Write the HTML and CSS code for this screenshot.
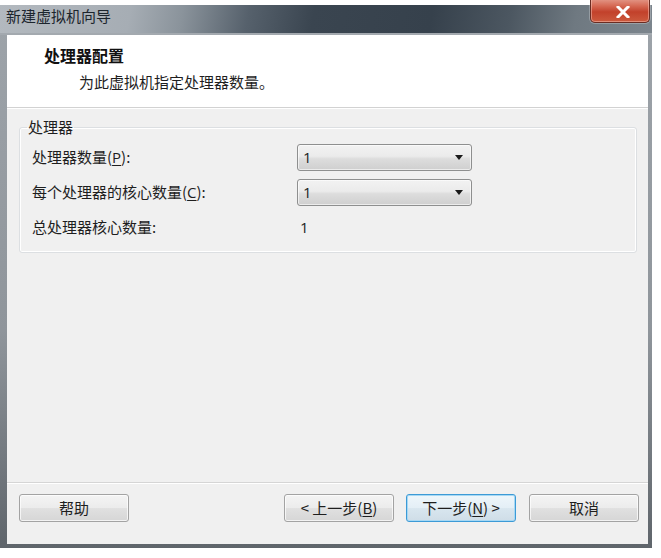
FILE: index.html
```html
<!DOCTYPE html>
<html lang="zh-CN">
<head>
<meta charset="utf-8">
<title>新建虚拟机向导</title>
<link rel="stylesheet" href="styles.css">
</head>
<body>
<div class="window">
  <div class="titlebar">
    <span class="title">新建虚拟机向导</span>
    <div class="close">
      <svg width="14" height="12" viewBox="0 0 14 12">
        <path d="M2 1 L12 11 M12 1 L2 11" stroke="#ffffff" stroke-width="3" stroke-linecap="square"/>
      </svg>
    </div>
  </div>
  <div class="client">
    <div class="header">
      <div class="h-title">处理器配置</div>
      <div class="h-sub">为此虚拟机指定处理器数量。</div>
    </div>
    <div class="body">
      <fieldset class="group">
        <legend>处理器</legend>
        <div class="grid">
          <div class="label">处理器数量(<u>P</u>):</div>
          <div class="combo"><span>1</span><i class="arrow"></i></div>
          <div class="label">每个处理器的核心数量(<u>C</u>):</div>
          <div class="combo"><span>1</span><i class="arrow"></i></div>
          <div class="label">总处理器核心数量:</div>
          <div class="value">1</div>
        </div>
      </fieldset>
    </div>
    <div class="footer">
      <div class="btn">帮助</div>
      <div class="spacer"></div>
      <div class="btn">&lt; 上一步(<u>B</u>)</div>
      <div class="btn default">下一步(<u>N</u>) &gt;</div>
      <div class="btn cancel">取消</div>
    </div>
  </div>
</div>
</body>
</html>
```

FILE: styles.css
```css
html, body {
  margin: 0;
  padding: 0;
  background: #ffffff;
}
body {
  width: 661px;
  height: 558px;
  overflow: hidden;
  font-family: "Open Sans", "Noto Sans CJK SC", sans-serif;
  font-size: 15px;
  color: #1e1e1e;
}
.window {
  position: relative;
  margin-top: 5px;
  width: 652px;
  height: 543px;
  box-sizing: border-box;
  padding: 0 4px 4px 7px;
  display: flex;
  flex-direction: column;
  background: linear-gradient(to bottom, #9ea4aa 0%, #8f959b 60%, #5f656b 100%);
}
.titlebar {
  height: 28px;
  margin: 0 -4px 0 -7px;
  padding-left: 6px;
  border-bottom: 2px solid #a3a9af;
  display: flex;
  align-items: flex-start;
  background: linear-gradient(100deg, #b3b9bf 0%, #a6adb4 20%, #8a939b 28%, #56616c 38%, #3a4550 48%, #36414c 66%, #4c5761 78%, #6f7981 88%, #7c858d 100%);
}
.title {
  padding-top: 2px;
  line-height: 18px;
  font-size: 15px;
  color: #1c252d;
  font-family: "Noto Sans CJK SC", sans-serif;
}
.close {
  position: absolute;
  top: -8px;
  right: 2px;
  width: 60px;
  height: 26px;
  box-sizing: border-box;
  border: 1px solid #6a2c22;
  border-top: none;
  border-radius: 0 0 5px 5px;
  background: linear-gradient(to bottom, #e7a597 0%, #d66a55 35%, #c2412b 60%, #cc5a3e 100%);
  box-shadow: inset 0 0 0 1px rgba(255, 210, 200, 0.45), 0 0 0 1px rgba(255, 255, 255, 0.25);
  display: flex;
  align-items: center;
  justify-content: center;
  padding-top: 2px;
}
.close svg {
  margin-left: 5px;
  margin-top: 2px;
}
.client {
  flex: 1;
  display: flex;
  flex-direction: column;
  background: #f0f0f0;
}
.header {
  height: 73px;
  box-sizing: border-box;
  background: #ffffff;
  border-bottom: 1px solid #d2d2d2;
  padding: 10px 0 0 37px;
}
.h-title {
  font-family: "Noto Sans CJK SC", sans-serif;
  font-weight: bold;
  font-size: 16px;
  line-height: 20px;
  color: #111111;
}
.h-sub {
  margin-top: 7px;
  padding-left: 35px;
  font-family: "Noto Sans CJK SC", sans-serif;
  font-size: 15px;
  line-height: 20px;
  color: #1e1e1e;
}
.body {
  flex: 1;
  padding: 9px 11px 0 12px;
  border-top: 1px solid #ffffff;
}
.group {
  margin: 0;
  padding: 7px 0 11px 12px;
  border: 1px solid #dcdfe2;
  border-radius: 3px;
  box-shadow: inset 0 0 0 1px #ffffff;
  min-width: 0;
}
.group legend {
  margin-left: -5px;
  padding: 0 1px;
  font-family: "Noto Sans CJK SC", sans-serif;
  font-size: 15px;
  line-height: 18px;
  color: #1e1e1e;
}
.grid {
  display: grid;
  grid-template-columns: 265px 175px;
  grid-auto-rows: 28px;
  row-gap: 7px;
  align-items: center;
}
.label {
  font-family: "Noto Sans CJK SC", sans-serif;
  font-size: 15px;
  line-height: 20px;
}
.label u {
  font-family: "Open Sans", sans-serif;
  text-underline-offset: 2px;
}
.combo {
  height: 27px;
  box-sizing: border-box;
  border: 1px solid #8e8f8f;
  border-radius: 3px;
  background: linear-gradient(to bottom, #f2f2f2 0%, #ebebeb 45%, #dddddd 55%, #cfcfcf 100%);
  box-shadow: inset 0 0 0 1px rgba(255, 255, 255, 0.6);
  display: flex;
  align-items: center;
  justify-content: space-between;
  padding: 0 8px 0 5px;
  font-size: 15px;
}
.arrow {
  width: 0;
  height: 0;
  border-left: 4px solid transparent;
  border-right: 4px solid transparent;
  border-top: 5px solid #1a1a1a;
}
.value {
  padding-left: 3px;
  font-size: 15px;
}
.footer {
  height: 50px;
  border-top: 1px solid #d5d5d5;
  display: flex;
  align-items: flex-start;
  padding: 11px 9px 0 12px;
  box-shadow: inset 0 1px 0 #ffffff;
}
.spacer {
  flex: 1;
}
.btn {
  width: 110px;
  height: 28px;
  box-sizing: border-box;
  border: 1px solid #a3a3a3;
  border-radius: 3px;
  background: linear-gradient(to bottom, #f4f4f4 0%, #ececec 48%, #e0e0e0 52%, #d6d6d6 100%);
  box-shadow: inset 0 0 0 1px rgba(255, 255, 255, 0.7);
  display: flex;
  align-items: center;
  justify-content: center;
  font-family: "Noto Sans CJK SC", sans-serif;
  font-size: 15px;
  line-height: 20px;
  color: #1e1e1e;
}
.btn u {
  text-underline-offset: 2px;
}
.btn.default {
  margin-left: 12px;
  border-color: #3c9ad6;
  box-shadow: inset 0 0 0 1px #a6d8f4;
  background: linear-gradient(to bottom, #eef6fb 0%, #e4eff6 48%, #d8e6ef 52%, #cfdde7 100%);
}
.btn.cancel {
  margin-left: 13px;
}
```
